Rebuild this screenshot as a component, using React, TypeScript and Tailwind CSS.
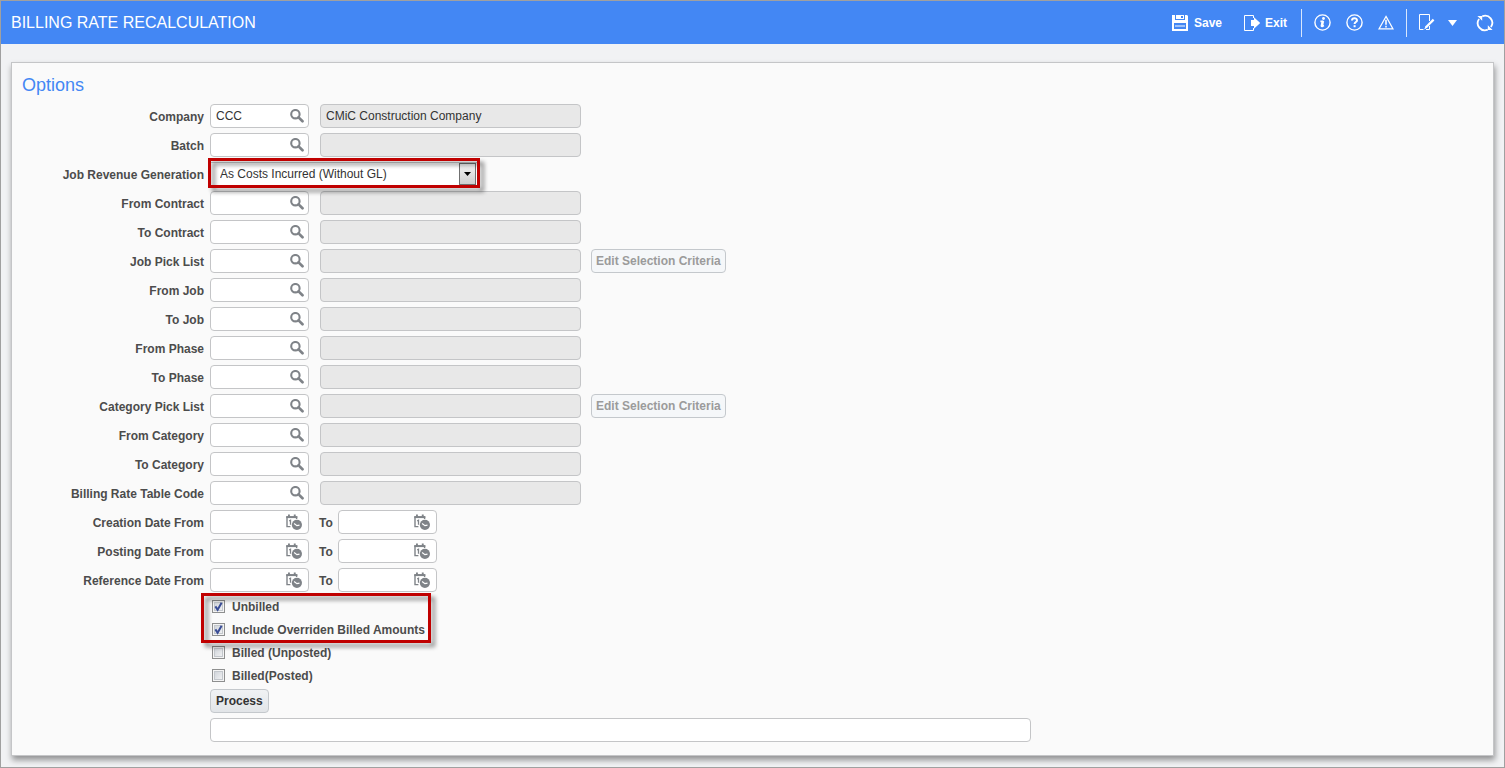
import { useId, useState, type ReactNode } from "react";

const fieldBox = "h-6 rounded border border-[#c4c5c7] bg-white";
const labelText = "font-bold text-[#4c4c4c]";

function SearchIcon() {
  return (
    <svg width="14" height="14" viewBox="0 0 14 14" fill="none" stroke="#7f8388" aria-hidden="true">
      <circle cx="5.4" cy="5.2" r="4.2" strokeWidth="2.1" />
      <path d="M8.6 8.4l3.9 3.9" strokeWidth="2.7" strokeLinecap="round" />
    </svg>
  );
}

function CalendarClockIcon() {
  return (
    <svg width="17" height="17" viewBox="0 0 17 17" fill="none" aria-hidden="true">
      <path d="M4.4 12.6H1V3h9.6v2" stroke="#7f8388" strokeWidth="1.4" />
      <path d="M0.3 2.2h11v1.9h-11z" fill="#7f8388" />
      <path d="M2 0.4h1.9v3H2zM7.8 0.4h1.9v3H7.8z" fill="#7f8388" />
      <path d="M3.2 6.8l1.3-.6v4.6" stroke="#7f8388" strokeWidth="1.3" />
      <circle cx="10.9" cy="10.8" r="5.1" fill="#7f8388" />
      <path d="M8.1 9.6l2.8 2.1 2.6-.5" stroke="#fff" strokeWidth="1.2" />
    </svg>
  );
}

function SaveIcon() {
  return (
    <svg width="16" height="16" viewBox="0 0 16 16" aria-hidden="true">
      <path fill="#fff" fillRule="evenodd" d="M0 0h15l1 1v15H0zM3 0v5h10V0zM2 8v6h12V8z" />
      <path fill="#fff" d="M4 0h8v4H4z" />
      <path fill="#4387f4" d="M9 1h2v2H9z" />
      <path fill="#fff" d="M3 10.5h10v1H3z" />
    </svg>
  );
}

function ExitIcon() {
  return (
    <svg width="17" height="16" viewBox="0 0 17 16" aria-hidden="true">
      <path d="M9.5 3V.5h-9v15h9V13" fill="none" stroke="#fff" />
      <path d="M7 5h3V2.2L16.2 8 10 13.8V11H7z" fill="#fff" />
    </svg>
  );
}

function InfoIcon() {
  return (
    <svg width="17" height="17" viewBox="0 0 17 17" fill="none" stroke="#fff" aria-hidden="true">
      <circle cx="8.5" cy="8.5" r="7.6" strokeWidth="1.4" />
      <circle cx="9.5" cy="4.5" r="1.4" fill="#fff" stroke="none" />
      <path d="M6.4 7.4h2L7.4 11.6q-.2 1 .8.8l1.8-.8" strokeWidth="1.6" />
      <path d="M9.2 7L8 12.4" strokeWidth="2" />
    </svg>
  );
}

function HelpIcon() {
  return (
    <svg width="17" height="17" viewBox="0 0 17 17" fill="none" stroke="#fff" aria-hidden="true">
      <circle cx="8.5" cy="8.5" r="7.6" strokeWidth="1.4" />
      <path d="M6 6.6c0-3.2 5-3.1 5-.2 0 1.7-2.4 1.6-2.4 3.6" strokeWidth="2" />
      <path d="M7.6 11.2h2v2h-2z" fill="#fff" stroke="none" />
    </svg>
  );
}

function WarningIcon() {
  return (
    <svg width="16" height="15" viewBox="0 0 16 15" fill="none" stroke="#fff" aria-hidden="true">
      <path d="M8 1.4L15 13.9H1z" strokeWidth="1.2" />
      <path d="M8 4.8v5M8 10.8v1.8" strokeWidth="1.6" />
    </svg>
  );
}

function EditIcon() {
  return (
    <svg width="16" height="17" viewBox="0 0 16 17" fill="none" stroke="#fff" aria-hidden="true">
      <path d="M10.5 7V.5H.5v15h4" />
      <path d="M10.5 12v3.5H7" />
      <path d="M14.6 5.6L7 13.2" strokeWidth="2.2" />
      <path d="M6.8 11.8l1.8 1.8-3.4 1.9z" fill="#fff" stroke="none" />
    </svg>
  );
}

function RefreshIcon() {
  return (
    <svg width="18" height="18" viewBox="0 0 18 18" fill="none" stroke="#fff" aria-hidden="true">
      <path d="M6.2 2.3A7.2 7.2 0 0 1 14.9 13.1" strokeWidth="1.8" />
      <path d="M11.8 15.7A7.2 7.2 0 0 1 3.1 4.9" strokeWidth="1.8" />
      <path d="M1.4 2h4.8v4.8z" fill="#fff" stroke="none" />
      <path d="M16.6 16h-4.8v-4.8z" fill="#fff" stroke="none" />
    </svg>
  );
}

function Header() {
  return (
    <header className="flex h-[43px] items-center justify-between bg-[#4387f4] pr-2.5 pl-2.5 text-white">
      <h1 className="text-base">BILLING RATE RECALCULATION</h1>
      <div className="flex items-center">
        <button type="button" className="flex items-center gap-1.5 font-bold">
          <SaveIcon />
          Save
        </button>
        <button type="button" className="ml-[22px] flex items-center gap-1 font-bold">
          <ExitIcon />
          Exit
        </button>
        <span className="mr-3 ml-3.5 h-7 w-px bg-white/80" />
        <div className="flex items-center gap-[15px]">
          <button type="button" aria-label="Information"><InfoIcon /></button>
          <button type="button" aria-label="Help"><HelpIcon /></button>
          <button type="button" aria-label="Warnings"><WarningIcon /></button>
        </div>
        <span className="mx-3 h-7 w-px bg-white/80" />
        <button type="button" aria-label="Edit"><EditIcon /></button>
        <button type="button" aria-label="More actions" className="ml-[13px]">
          <svg width="9" height="6" viewBox="0 0 9 6" aria-hidden="true">
            <path d="M0 0h9L4.5 6z" fill="#fff" />
          </svg>
        </button>
        <button type="button" aria-label="Refresh" className="ml-[19px]"><RefreshIcon /></button>
      </div>
    </header>
  );
}

function Highlight({ className }: { className: string }) {
  return (
    <span
      aria-hidden="true"
      className={`pointer-events-none absolute z-10 border-3 border-[#c00000] drop-shadow-[4px_4px_2px_rgba(0,0,0,0.45)] ${className}`}
    />
  );
}

function Row({ id, label, children }: { id: string; label: string; children: ReactNode }) {
  return (
    <div className="flex h-6 items-center">
      <label htmlFor={id} className={`mr-1.5 w-48 shrink-0 pt-px text-right ${labelText}`}>
        {label}
      </label>
      {children}
    </div>
  );
}

type LookupProps = { label: string; code?: string; description?: string; pick?: boolean };

function LookupRow({ label, code = "", description = "", pick = false }: LookupProps) {
  const id = useId();
  return (
    <Row id={id} label={label}>
      <div className={`flex w-[99px] items-center pr-1 pl-[5px] ${fieldBox}`}>
        <input id={id} defaultValue={code} className="min-w-0 flex-1 bg-transparent text-[#333] outline-none" />
        <button type="button" aria-label={`Search ${label}`}><SearchIcon /></button>
      </div>
      <input
        readOnly
        aria-label={`${label} description`}
        value={description}
        className="ml-[11px] h-6 w-[261px] rounded border border-[#c4c5c7] bg-[#e8e8e8] px-[5px] text-[#333] outline-none"
      />
      {pick && (
        <button
          type="button"
          disabled
          className="ml-2.5 h-6 rounded border border-[#c4c8cc] bg-[#f5f7f9] px-1 font-bold text-[#9b9b9b]"
        >
          Edit Selection Criteria
        </button>
      )}
    </Row>
  );
}

function DateField({ id, label }: { id: string; label: string }) {
  return (
    <div className={`flex w-[99px] items-center pr-[5px] pl-[5px] ${fieldBox}`}>
      <input id={id} className="min-w-0 flex-1 bg-transparent text-[#333] outline-none" />
      <button type="button" aria-label={`Choose ${label}`}><CalendarClockIcon /></button>
    </div>
  );
}

function DateRow({ label }: { label: string }) {
  const from = useId();
  const to = useId();
  return (
    <Row id={from} label={label}>
      <DateField id={from} label={label} />
      <label htmlFor={to} className={`mr-[5px] ml-2.5 pt-px ${labelText}`}>To</label>
      <DateField id={to} label={`${label} To`} />
    </Row>
  );
}

function RevenueRow() {
  const id = useId();
  return (
    <Row id={id} label="Job Revenue Generation">
      <div className="relative flex h-6 w-[268px] items-center border border-[#c4c5c7] bg-white">
        <select
          id={id}
          defaultValue="without-gl"
          className="h-full w-full appearance-none bg-transparent pl-[9px] text-[#333] outline-none"
        >
          <option value="without-gl">As Costs Incurred (Without GL)</option>
        </select>
        <span
          aria-hidden="true"
          className="pointer-events-none absolute top-0 right-px flex h-[22px] w-[17px] items-center justify-center border border-[#707070] bg-linear-to-b from-[#f4f4f4] to-[#cfcfcf]"
        >
          <svg width="7" height="4" viewBox="0 0 7 4">
            <path d="M0 0h7L3.5 4z" fill="#000" />
          </svg>
        </span>
        <Highlight className="-top-[5px] -right-[3px] -bottom-[3px] -left-[3px]" />
      </div>
    </Row>
  );
}

function CheckRow({ label, initial = false }: { label: string; initial?: boolean }) {
  const [checked, setChecked] = useState(initial);
  return (
    <label className={`flex h-[23px] items-center ${labelText}`}>
      <span className="relative mr-[7px] flex size-[13px]">
        <input
          type="checkbox"
          checked={checked}
          onChange={(e) => setChecked(e.target.checked)}
          className="size-[13px] appearance-none border border-[#8e8f8f] bg-linear-to-br from-[#c9ced5] to-[#f8f8f8] shadow-[inset_0_0_0_1px_#f4f4f4,inset_0_0_0_2px_#c3c7cc]"
        />
        {checked && (
          <svg width="13" height="13" viewBox="0 0 13 13" className="pointer-events-none absolute inset-0" aria-hidden="true">
            <path d="M3.4 6.4l2.2 3.4L9.6 2.8" fill="none" stroke="#3a4d96" strokeWidth="2" />
          </svg>
        )}
      </span>
      {label}
    </label>
  );
}

export default function App() {
  return (
    <div className="flex min-h-screen flex-col border border-[#a0a0a0] bg-[#f1f2f4] font-['Liberation_Sans',Arial,sans-serif] text-xs">
      <Header />
      <main className="mx-2.5 mt-[18px] border border-[#c4c5c7] bg-[#fafafa] pt-3 pb-[13px] shadow-[1px_4px_6px_rgba(0,0,0,0.4)]">
        <h2 className="mb-[9px] pl-2.5 text-lg leading-5 text-[#4387f4]">Options</h2>
        <form className="flex flex-col gap-[5px]" onSubmit={(e) => e.preventDefault()}>
          <LookupRow label="Company" code="CCC" description="CMiC Construction Company" />
          <LookupRow label="Batch" />
          <RevenueRow />
          <LookupRow label="From Contract" />
          <LookupRow label="To Contract" />
          <LookupRow label="Job Pick List" pick />
          <LookupRow label="From Job" />
          <LookupRow label="To Job" />
          <LookupRow label="From Phase" />
          <LookupRow label="To Phase" />
          <LookupRow label="Category Pick List" pick />
          <LookupRow label="From Category" />
          <LookupRow label="To Category" />
          <LookupRow label="Billing Rate Table Code" />
          <DateRow label="Creation Date From" />
          <DateRow label="Posting Date From" />
          <DateRow label="Reference Date From" />
          <div className="-mt-0.5 ml-[198px] flex flex-col items-start">
            <div className="relative pl-0.5">
              <CheckRow label="Unbilled" initial />
              <CheckRow label="Include Overriden Billed Amounts" initial />
              <Highlight className="-top-0.5 -right-1.5 -bottom-0.5 -left-[9px]" />
            </div>
            <div className="pl-0.5">
              <CheckRow label="Billed (Unposted)" />
              <CheckRow label="Billed(Posted)" />
            </div>
            <button
              type="submit"
              className="mt-0.5 h-6 rounded border border-[#c4c8cc] bg-linear-to-b from-[#f0f2f4] to-[#e2e5e8] px-[5px] font-bold text-[#333]"
            >
              Process
            </button>
            <input aria-label="Process status" readOnly className={`mt-[5px] w-[821px] px-[5px] outline-none ${fieldBox}`} />
          </div>
        </form>
      </main>
    </div>
  );
}
